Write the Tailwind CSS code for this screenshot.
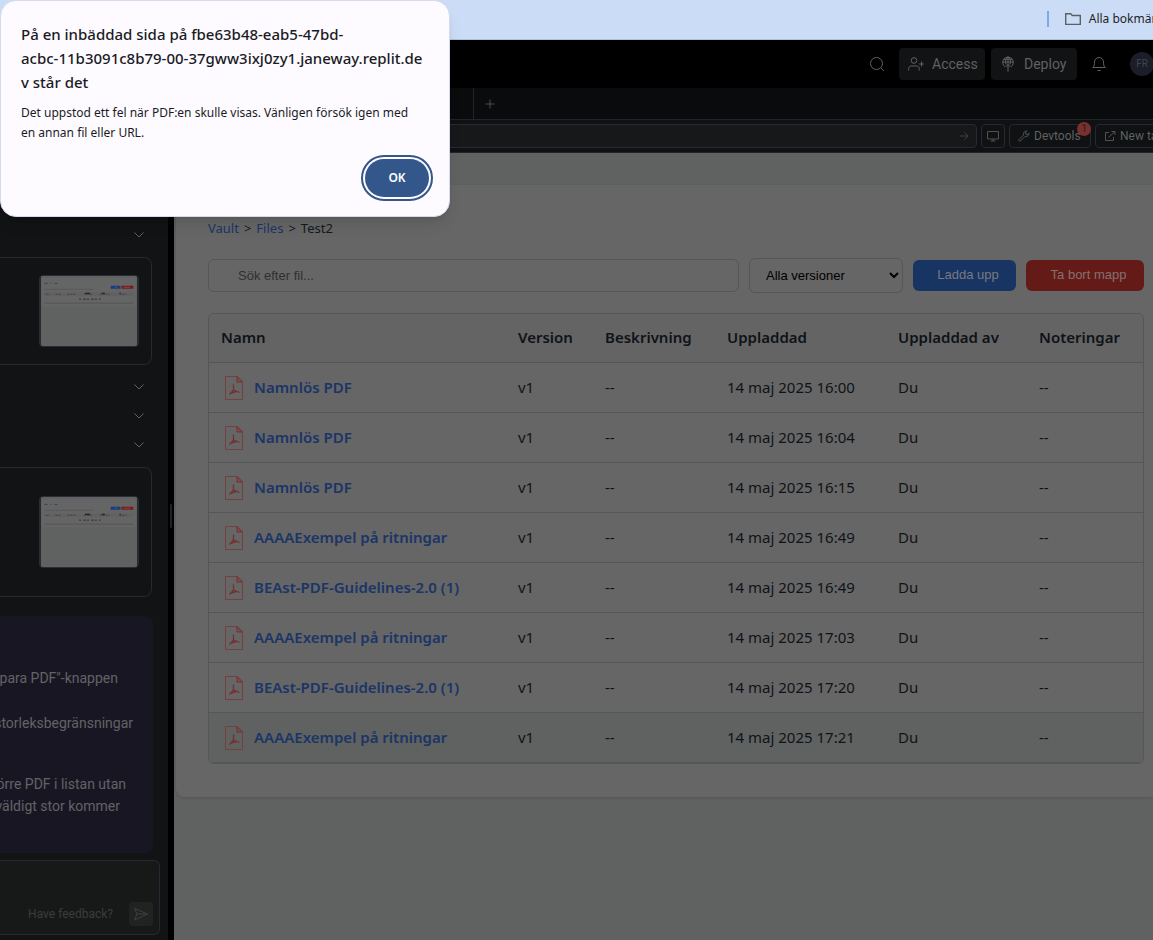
<!DOCTYPE html>
<html lang="sv">
<head>
<meta charset="utf-8">
<title>Test2</title>
<script src="https://cdn.jsdelivr.net/npm/@tailwindcss/browser@4"></script>
</head>
<body class="relative flex h-screen flex-col overflow-hidden bg-black font-['Roboto',sans-serif] text-sm text-[#5f6163]">
<svg class="hidden">
  <symbol id="chev" viewBox="0 0 12 8"><path d="M1.500 1.500l4.500 4.500 4.500-4.500" fill="none" stroke="currentColor"/></symbol>
  <symbol id="pdf" viewBox="0 0 20 24"><path d="M1.500 .5h11.500l5.500 5.500v17.500H1.500z" fill="none" stroke="#73403f"/><path d="M13 .5v5.500h5.500z" fill="#7b4f4e" stroke="#73302f"/><path d="M9.500 8.500v5.500l-4 4.500M9.500 14l6 2.500M7 17l5.500-1.500" fill="none" stroke="#73302f" stroke-width="1.300"/></symbol>
  <symbol id="shot" viewBox="0 0 98 71">
    <path d="M0 0h98v71H0z" fill="#5f6261"/><path d="M1 2h96v29H1z" fill="#656565"/>
    <path d="M4 7.500h3M10 7.500h1M14 7.500h3" stroke="#33415a" />
    <path d="M4 13.500h49" stroke="#575859"/><path d="M71 10h10v3H71z" fill="#1a3d7c"/><path d="M82 10h12v3H82z" fill="#7c1c1a"/>
    <path d="M76 11.500h2M85 11.500h5" stroke="#777" stroke-dasharray="1 1"/>
    <path d="M4 18.500h90" stroke="#5f6163" stroke-width="3"/>
    <path d="M5 18.500h4M15 18.500h5M27 18.500h8M44 18.500h9M60 18.500h10M80 18.500h7" stroke="#3e4043" stroke-dasharray="2 1"/>
    <path d="M45 17.500h5M62 17.500h3M80 17.500h1" stroke="#111"/>
    <path d="M39 23.500h22" stroke="#303236" stroke-dasharray="2 2 3 1"/><path d="M4 27.500h90" stroke="#525354"/>
  </symbol>
</svg>

<div class="flex h-10 shrink-0 items-center justify-end border-b border-[#aebedc] bg-[#cbdcf6] pb-px font-['Noto_Sans',sans-serif] text-xs text-[#1f1f1f]">
  <span class="mr-4 h-4 w-[2px] bg-[#7fa8ea]"></span>
  <button class="-mr-6 flex shrink-0 items-center gap-2 whitespace-nowrap">
    <svg class="size-4" viewBox="0 0 16 16" fill="none" stroke="#5c6065" stroke-width="1.400"><path d="M.7 12.700V2.700h5l1.600 1.800h8v8.900H.7z"/></svg>
    Alla bokmärken
  </button>
</div>

<header class="flex h-12 shrink-0 items-center justify-end">
  <button class="mr-2.5 p-1" aria-label="Search"><svg class="size-4" viewBox="0 0 16 16" fill="none" stroke="currentColor"><circle cx="7.500" cy="7.500" r="6"/><path d="M12 12l3 3"/></svg></button>
  <button class="mr-1.5 flex h-8 w-[86px] items-center gap-2 rounded bg-[#111314] pl-[9px]">
    <svg class="size-4" viewBox="0 0 16 16" fill="none" stroke="currentColor"><circle cx="6" cy="4.500" r="2.800"/><path d="M.7 14.500v-2c0-1.500 1-2.500 2.500-2.500h5.500c1.500 0 2.500 1 2.500 2.500v2M13.500 5.500v5M11 8h5"/></svg>Access</button>
  <button class="flex h-8 w-[86px] items-center gap-2 rounded bg-[#111314] pl-[9px]">
    <svg class="size-4" viewBox="0 0 16 16" fill="none" stroke="currentColor"><path d="M5 10.800A5.300 5.300 0 1 1 11 10.800M2.600 6h10.800M3.500 3.300h9M8 .7v15M6 8.500C5 6 5.500 2 8 .7M10 8.500C11 6 10.500 2 8 .7M5.500 11L8 8.500 10.500 11"/></svg>Deploy</button>
  <button class="ml-3.5 mr-[23px]" aria-label="Notifications"><svg class="size-4" viewBox="0 0 16 16" fill="none" stroke="currentColor"><path d="M1.800 11.500C3.300 10 3.500 8.500 3.500 6a4.500 4.500 0 0 1 9 0c0 2.500.2 4 1.700 5.500zM6.500 14.500h3"/></svg></button>
  <span class="-mr-px flex size-6 items-center justify-center rounded-full bg-[#1b1e29] text-[10px] text-[#3f4352]">FR</span>
</header>

<div class="flex min-h-0 flex-1">
  <aside class="flex w-[168px] shrink-0 flex-col overflow-hidden bg-[#111314] pt-[140px] text-[#626364]">
    <button class="mr-5 self-end p-[3px]" aria-label="Expand"><svg class="h-2 w-3"><use href="#chev"/></svg></button>
    <div class="mr-4 mt-[15px] flex h-[108px] justify-end rounded-r-lg border border-l-0 border-[#27292b] pr-3 pt-[17px]">
      <svg class="h-[72px] w-[100px] rounded border border-[#2a2c3a]"><use href="#shot"/></svg>
    </div>
    <div class="mr-5 mt-[15px] flex flex-col items-end gap-[15px] self-end pb-[15px]">
      <button class="p-[3px]" aria-label="Expand"><svg class="h-2 w-3"><use href="#chev"/></svg></button>
      <button class="p-[3px]" aria-label="Expand"><svg class="h-2 w-3"><use href="#chev"/></svg></button>
      <button class="p-[3px]" aria-label="Expand"><svg class="h-2 w-3"><use href="#chev"/></svg></button>
    </div>
    <div class="mr-4 flex h-[130px] shrink-0 justify-end rounded-r-lg border border-l-0 border-[#27292b] pr-3 pt-7">
      <svg class="h-[72px] w-[100px] rounded border border-[#2a2c3a]"><use href="#shot"/></svg>
    </div>
    <div class="mr-[15px] mt-[19px] flex h-[237px] shrink-0 flex-col items-end rounded-r-lg bg-[#191624] pt-[51px] leading-[22px] whitespace-nowrap">
      <p class="mb-[23px] pr-[35px]">”Spara PDF"-knappen</p>
      <p class="mb-[39px] pr-5">storleksbegränsningar</p>
      <p class="pr-[27px]">en större PDF i listan utan</p>
      <p class="pr-[33px]">en väldigt stor kommer</p>
    </div>
    <div class="mb-[5px] mr-2 mt-[7px] flex flex-1 items-end justify-end gap-4 rounded-r-md border border-l-0 border-[#272834] bg-[#171919] pb-2 pr-1.5">
      <a href="#" class="pb-1 text-xs text-[#3a3c3e]">Have feedback?</a>
      <button class="flex size-6 items-center justify-center rounded bg-[#212222]" aria-label="Send"><svg class="size-4" viewBox="0 0 16 16" fill="none" stroke="#3d3f41"><path d="M1.500 2.500L14.500 8 1.500 14 4 8zM4 8h10"/></svg></button>
    </div>
  </aside>
  <div class="flex w-1.5 shrink-0 justify-center pt-[416px]"><span class="h-6 w-[2px] rounded bg-[#1f202a]"></span></div>

  <main class="flex min-w-0 flex-1 flex-col bg-[#5f6261]">
    <div class="flex h-8 shrink-0 border-b border-[#222327] bg-[#0a0b0d]">
      <div class="w-[300px] border-r border-[#222327]"></div>
      <button class="ml-2.5" aria-label="New tab"><svg class="size-3" viewBox="0 0 12 12" stroke="#4a4c4e"><path d="M6 1.500v9M1.500 6h9"/></svg></button>
    </div>
    <div class="flex h-[33px] shrink-0 items-center gap-1 border-b border-[#22232c] bg-[#0f1112] text-xs">
      <label class="flex h-6 min-w-0 flex-1 items-center rounded border border-[#272834] bg-[#171819] pr-1.5">
        <input class="min-w-0 flex-1 bg-transparent" aria-label="URL"><svg class="size-3" viewBox="0 0 12 12" fill="none" stroke="#3f4143"><path d="M2 6h8M6.500 2.500L10 6 6.500 9.500"/></svg>
      </label>
      <button class="flex h-6 w-6 shrink-0 items-center justify-center rounded border border-[#272834]" aria-label="Device"><svg class="size-3" viewBox="0 0 12 12" fill="none" stroke="#505254"><path d="M.5 1.500h11v7.500H.5zM3.500 11h5M6 9v2"/></svg></button>
      <button class="relative flex h-6 w-[82px] shrink-0 items-center gap-1 rounded border border-[#272834] pl-2"><svg class="size-3" viewBox="0 0 12 12" fill="none" stroke="#505254"><path d="M1 9.500l4.500-4.500C5 3 6.500.7 9 1L7.500 2.800l.3 1.400 1.400.3L11 3c.4 2.500-1.800 4-4 3.500L2.500 11C1.500 11.800.2 10.500 1 9.500z"/></svg>Devtools
        <span class="absolute -right-px -top-[3px] flex size-3.5 items-center justify-center rounded-full bg-[#7b302f] text-[11px] text-[#222]">1</span></button>
      <button class="-mr-6 flex h-6 w-[82px] shrink-0 items-center gap-1 rounded border border-[#272834] pl-2"><svg class="size-3" viewBox="0 0 12 12" fill="none" stroke="#505254"><path d="M5 2.500H1.500v8h8V7M7.500 1.500h3.500V5M11 1.500L4.500 7.500"/></svg><span class="whitespace-nowrap">New tab</span></button>
    </div>

    <section class="ml-0.5 mt-8 rounded-bl-lg bg-[#666] pb-[33px] pl-8 pr-[9px] pt-[34px] font-['Noto_Sans',sans-serif] shadow-sm">
      <nav class="flex h-[19px] items-center gap-[5px] text-[13px] text-[#15181d]">
        <a href="#" class="text-[#1b3566]">Vault</a><span>&gt;</span><a href="#" class="text-[#1b3566]">Files</a><span>&gt;</span><span>Test2</span>
      </nav>
      <div class="mt-5 flex items-center gap-2.5 font-['Liberation_Sans',sans-serif] text-[13px]">
        <input type="text" aria-label="Sök" placeholder="Sök efter fil..." class="h-[33px] min-w-0 flex-1 rounded-md border border-[#55565a] pl-[29px] placeholder:text-[#2e3032]">
        <select aria-label="Version" class="h-[35px] w-[154px] rounded-md border border-[#55565a] bg-[#666] pl-3 text-black"><option>Alla versioner</option></select>
        <button class="h-[31px] w-[103px] rounded-md bg-[#183462] pl-[7px] text-[#777a80]">Ladda upp</button>
        <button class="h-[31px] w-[118px] rounded-md bg-[#641b18] pl-[7px] text-[#85706f]">Ta bort mapp</button>
      </div>
      <div class="mt-5 overflow-hidden rounded-md border border-[#55565a]">
        <table class="w-full table-fixed text-left text-[15px] text-[#0f1318]">
          <colgroup><col><col class="w-[87px]"><col class="w-[122px]"><col class="w-[171px]"><col class="w-[141px]"><col class="w-[116px]"></colgroup>
          <thead><tr class="h-12 border-b border-[#55565a] bg-[#646464] *:pl-3 *:font-semibold"><th>Namn</th><th>Version</th><th>Beskrivning</th><th>Uppladdad</th><th>Uppladdad av</th><th>Noteringar</th></tr></thead>
          <tbody id="rows"></tbody>
        </table>
      </div>
    </section>
  </main>
</div>

<div role="alertdialog" aria-labelledby="dt" class="absolute left-0 top-0 flex h-[217px] w-[450px] flex-col rounded-2xl border border-[#d5dbea] bg-[#fdfbff] px-5 pt-[21px] font-['Noto_Sans',sans-serif] text-[#1b1b1f] shadow-lg">
  <h1 id="dt" class="text-[15px] font-medium leading-6 whitespace-nowrap">På en inbäddad sida på fbe63b48-eab5-47bd-<br>acbc-11b3091c8b79-00-37gww3ixj0zy1.janeway.replit.de<br>v står det</h1>
  <p class="mt-[9px] text-xs leading-5 whitespace-nowrap">Det uppstod ett fel när PDF:en skulle visas. Vänligen försök igen med<br>en annan fil eller URL.</p>
  <button class="mt-4 h-[38px] w-16 self-end rounded-full bg-[#33578a] text-xs font-semibold text-white outline-2 outline-offset-2 outline-[#33578a]">OK</button>
</div>
<script>
const files = [["Namnlös PDF","16:00"],["Namnlös PDF","16:04"],["Namnlös PDF","16:15"],["AAAAExempel på ritningar","16:49"],["BEAst-PDF-Guidelines-2.0 (1)","16:49"],["AAAAExempel på ritningar","17:03"],["BEAst-PDF-Guidelines-2.0 (1)","17:20"],["AAAAExempel på ritningar","17:21"]];
document.getElementById("rows").innerHTML = files.map(([n,t]) => `<tr class="h-[50px] border-b border-[#55565a] *:pl-3 *:pt-0.5 last:bg-[#5f6261]"><td><a href="#" class="flex items-center gap-2.5 pl-[3px] font-semibold text-[#1b3566]"><svg class="h-6 w-5"><use href="#pdf"/></svg>${n}</a></td><td>v1</td><td>--</td><td>14 maj 2025 ${t}</td><td>Du</td><td>--</td></tr>`).join("");
</script>
</body>
</html>
